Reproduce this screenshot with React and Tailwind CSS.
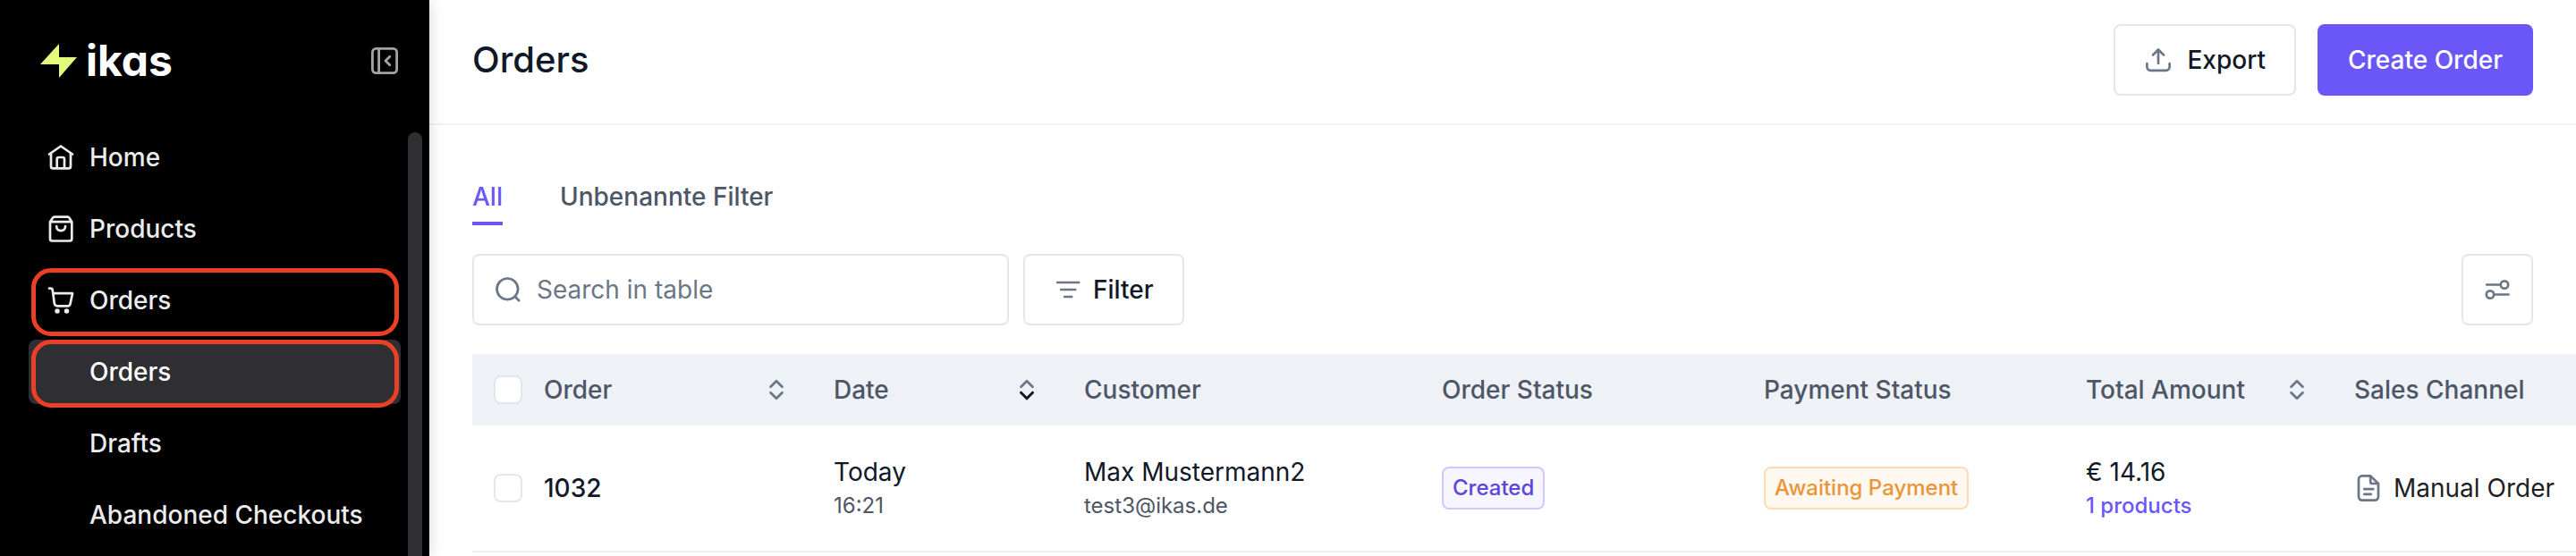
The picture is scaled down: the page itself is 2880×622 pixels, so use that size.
import React, { useState } from 'react';
import clsx from 'clsx';

const Icon = ({ children, className = 'text-[#6b7686]' }) => (
  <svg
    viewBox="0 0 32 32"
    className={clsx('w-8 h-8 shrink-0', className)}
    fill="none"
    stroke="currentColor"
    strokeWidth="2.7"
    strokeLinecap="round"
    strokeLinejoin="round"
    aria-hidden="true"
  >
    {children}
  </svg>
);

const HomeIcon = () => (
  <Icon className="text-[#ececec]">
    <path d="M3 12.5 16 3.5l13 9" />
    <path d="M5 11.5v14.4a2.5 2.5 0 0 0 2.5 2.5h17a2.5 2.5 0 0 0 2.5-2.5V11.5" />
    <path d="M11.7 28V18a2 2 0 0 1 2-2H18a2 2 0 0 1 2 2v10" />
  </Icon>
);

const BagIcon = () => (
  <Icon className="text-[#ececec]">
    <path d="M4 8.2v18.8a2.5 2.5 0 0 0 2.5 2.5h19.3a2.5 2.5 0 0 0 2.5-2.5V8.2l-3-4.6a2 2 0 0 0-1.7-1H8.8a2 2 0 0 0-1.7 1L4 8.2h24" />
    <path d="M11.2 13.2c0 3 2 4.9 4.9 4.9s4.9-1.9 4.9-4.9" />
  </Icon>
);

const CartIcon = () => (
  <Icon className="text-[#ececec]">
    <path d="M3 2.6h1.6c1.4 0 2 .6 2.2 2L8.8 19.4c.3 2 1.3 2.9 3.2 2.9h11.8c1.6 0 2.4-.8 2.7-2.3l2.6-11.8H7.4" />
    <circle cx="12" cy="28" r="1.4" fill="currentColor" />
    <circle cx="22.5" cy="28" r="1.4" fill="currentColor" />
  </Icon>
);

const SortIcon = ({ direction }) => (
  <Icon>
    <path d="M9.5 12.8 16 6.2l6.5 6.6" className={direction === 'asc' ? 'text-[#111827]' : ''} stroke="currentColor" />
    <path
      d="M9.5 19.2 16 25.8l6.5-6.6"
      strokeWidth={direction === 'desc' ? 3 : 2.7}
      className={direction === 'desc' ? 'text-[#111827]' : ''}
      stroke="currentColor"
    />
  </Icon>
);

const navItems = [
  { label: 'Home', icon: HomeIcon },
  { label: 'Products', icon: BagIcon },
  { label: 'Orders', icon: CartIcon, marked: true },
  { label: 'Orders', active: true, marked: true },
  { label: 'Drafts' },
  { label: 'Abandoned Checkouts' },
];

const Sidebar = () => (
  <aside className="relative z-10 flex w-[480px] shrink-0 flex-col bg-black shadow-[0_0_16px_rgba(0,0,0,0.16)]">
    <div className="flex h-[140px] items-center justify-between pb-1 pl-[45px] pr-[35px]">
      <a href="#home" className="flex items-center gap-[10px]" aria-label="ikas">
        <svg viewBox="0 0 41 38" className="w-[41px] h-[38px]" fill="#e2fb7d" aria-hidden="true">
          <path d="M21 0 0 23h21v15L41 15H21Z" />
        </svg>
        <span className="text-5xl leading-none font-bold text-white [font-feature-settings:'cv11']">ikas</span>
      </a>
      <button type="button" aria-label="Collapse menu">
        <svg viewBox="0 0 30 30" className="w-[30px] h-[30px] text-[#a3a3a3]" fill="none" stroke="currentColor" strokeWidth="2.8" aria-hidden="true">
          <rect x="1.4" y="1.4" width="27.2" height="27.2" rx="4" />
          <path d="M8.6 2v26" />
          <path d="m20.8 10.2-4.8 4.8 4.8 4.8" strokeLinecap="round" strokeLinejoin="round" />
        </svg>
      </button>
    </div>
    <div className="flex flex-1 gap-2 pl-8 pr-2">
      <nav className="flex flex-1 flex-col gap-2">
        {navItems.map(({ label, icon: ItemIcon, active, marked }, i) => (
          <a
            key={i}
            href={`#${label.toLowerCase().replace(' ', '-')}`}
            className={clsx(
              'relative flex h-[72px] items-center gap-4 rounded-lg px-5 text-[28px] leading-10 font-medium',
              active ? 'bg-[#2f2e33] text-white' : 'text-[#ececec]'
            )}
          >
            {ItemIcon ? <ItemIcon /> : <span className="w-8" />}
            {label}
            {marked && <span className="absolute left-[3px] right-[2px] top-0 -bottom-1 rounded-[22px] border-5 border-[#ea4025]" />}
          </a>
        ))}
      </nav>
      <div className="mt-2 w-4 rounded-t-full bg-[#2f2e33]" />
    </div>
  </aside>
);

const Header = () => (
  <header className="flex h-[140px] items-center justify-between border-b-2 border-[#eef1f6] px-12 pb-1">
    <h1 className="text-[40px] leading-12 font-medium">Orders</h1>
    <div className="flex gap-6 text-[28px] font-medium">
      <button type="button" className="flex h-20 items-center gap-4 rounded-lg border-2 border-[#e2e6ee] px-8">
        <Icon>
          <path d="M16 20V5" />
          <path d="m10 10.5 6-6 6 6" />
          <path d="M3.4 20.2v3.6a4 4 0 0 0 4 4h17.2a4 4 0 0 0 4-4v-3.6" />
        </Icon>
        Export
      </button>
      <button type="button" className="h-20 rounded-lg bg-[#6b57f8] px-[34px] text-white">
        Create Order
      </button>
    </div>
  </header>
);

const Tabs = () => {
  const [current, setCurrent] = useState('All');

  return (
    <div className="flex gap-16 text-[28px] leading-10 font-medium">
      {['All', 'Unbenannte Filter'].map((tab) => (
        <button
          key={tab}
          type="button"
          onClick={() => setCurrent(tab)}
          className={clsx('border-b-4 pb-2', tab === current ? 'border-[#6b57f8] text-[#6b57f8]' : 'border-transparent text-[#4d5666]')}
        >
          {tab}
        </button>
      ))}
    </div>
  );
};

const Toolbar = () => (
  <div className="mt-8 flex gap-4 pr-12">
    <label className="flex h-20 w-[600px] items-center gap-4 rounded-lg border-2 border-[#e2e6ee] px-[22px]">
      <Icon>
        <circle cx="15.3" cy="15.3" r="11.8" />
        <path d="m24 24 4.2 4.2" />
      </Icon>
      <input
        type="text"
        aria-label="Search in table"
        placeholder="Search in table"
        className="min-w-0 flex-1 text-[28px] leading-10 outline-none placeholder:text-[#6b7686]"
      />
    </label>
    <button type="button" className="flex h-20 items-center gap-3 rounded-lg border-2 border-[#e2e6ee] px-8 text-[28px] font-medium">
      <Icon>
        <path d="M4.2 8h24M8.2 16h16M12.2 24h8" />
      </Icon>
      Filter
    </button>
    <button type="button" aria-label="Table settings" className="ml-auto flex size-20 items-center justify-center rounded-lg border-2 border-[#e2e6ee]">
      <Icon>
        <path d="M4.2 10.5h15M13 21.5h15.6" />
        <circle cx="24" cy="10.5" r="4.2" />
        <circle cx="8" cy="21.5" r="4.2" />
      </Icon>
    </button>
  </div>
);

const Checkbox = ({ label }) => (
  <input
    type="checkbox"
    aria-label={label}
    className="block size-8 appearance-none rounded-lg border-2 border-[#e4e6ef] bg-white checked:bg-[#6b57f8]"
  />
);

const columns = [
  { label: 'Order', width: 'w-[324px]', sort: 'none' },
  { label: 'Date', width: 'w-[280px]', sort: 'desc' },
  { label: 'Customer', width: 'w-[400px]' },
  { label: 'Order Status', width: 'w-[360px]' },
  { label: 'Payment Status', width: 'w-[360px]' },
  { label: 'Total Amount', width: 'w-[300px]', sort: 'none' },
  { label: 'Sales Channel', width: '' },
];

const orders = [
  {
    id: '1032',
    day: 'Today',
    time: '16:21',
    name: 'Max Mustermann2',
    email: 'test3@ikas.de',
    status: 'Created',
    payment: 'Awaiting Payment',
    total: '€ 14.16',
    items: '1 products',
    channel: 'Manual Order',
  },
];

const Badge = ({ children, className }) => (
  <span className={clsx('inline-flex h-12 items-center rounded-lg border-2 px-[10px] text-2xl font-medium', className)}>{children}</span>
);

const OrdersTable = () => (
  <table className="mt-8 w-full table-fixed border-separate border-spacing-0 text-left text-[28px] leading-10">
    <thead className="bg-[#eef1f6] text-[#4d5666]">
      <tr className="h-20">
        <th className="w-14 pl-6">
          <Checkbox label="Select all orders" />
        </th>
        {columns.map(({ label, width, sort }) => (
          <th key={label} className={clsx('px-6 font-medium whitespace-nowrap', width)}>
            <div className="flex items-center justify-between">
              {label}
              {sort && (
                <button type="button" aria-label={`Sort by ${label}`}>
                  <SortIcon direction={sort} />
                </button>
              )}
            </div>
          </th>
        ))}
      </tr>
    </thead>
    <tbody>
      {orders.map((order) => (
        <tr key={order.id} className="h-[142px] whitespace-nowrap *:border-b-2 *:border-[#eef1f6]">
          <td className="pl-6">
            <Checkbox label={`Select order ${order.id}`} />
          </td>
          <td className="px-6 font-medium">{order.id}</td>
          <td className="px-6">
            <div>{order.day}</div>
            <div className="text-2xl leading-9 text-[#4d5666]">{order.time}</div>
          </td>
          <td className="px-6">
            <div>{order.name}</div>
            <div className="text-2xl leading-9 text-[#4d5666]">{order.email}</div>
          </td>
          <td className="px-6">
            <div className="flex">
              <Badge className="border-[#d0c8fb] bg-[#f7f5ff] text-[#5a46d8]">{order.status}</Badge>
            </div>
          </td>
          <td className="px-6">
            <div className="flex">
              <Badge className="border-[#f9dcb2] bg-[#fef8f1] text-[#ec9436]">{order.payment}</Badge>
            </div>
          </td>
          <td className="px-6">
            <div>{order.total}</div>
            <a href="#products" className="block text-2xl leading-9 font-medium text-[#6b57f8]">{order.items}</a>
          </td>
          <td className="pl-6 text-[#1f1f1f]">
            <div className="flex items-center gap-3">
              <Icon>
                <path d="M18.2 2.4H9a4 4 0 0 0-4 4v19.2a4 4 0 0 0 4 4h14a4 4 0 0 0 4-4V11Z" />
                <path d="M18.2 2.8v6.4a1.8 1.8 0 0 0 1.8 1.8h6.8" />
                <path d="M11.3 17.2h10M11.3 22.8h7.6" />
              </Icon>
              {order.channel}
            </div>
          </td>
        </tr>
      ))}
    </tbody>
  </table>
);

const App = () => (
  <div className="flex min-h-screen bg-white font-['Inter',sans-serif] text-[#111827]">
    <Sidebar />
    <main className="min-w-0 flex-1">
      <Header />
      <div className="overflow-hidden pt-[60px] pl-12">
        <Tabs />
        <Toolbar />
        <OrdersTable />
      </div>
    </main>
  </div>
);

export default App;
